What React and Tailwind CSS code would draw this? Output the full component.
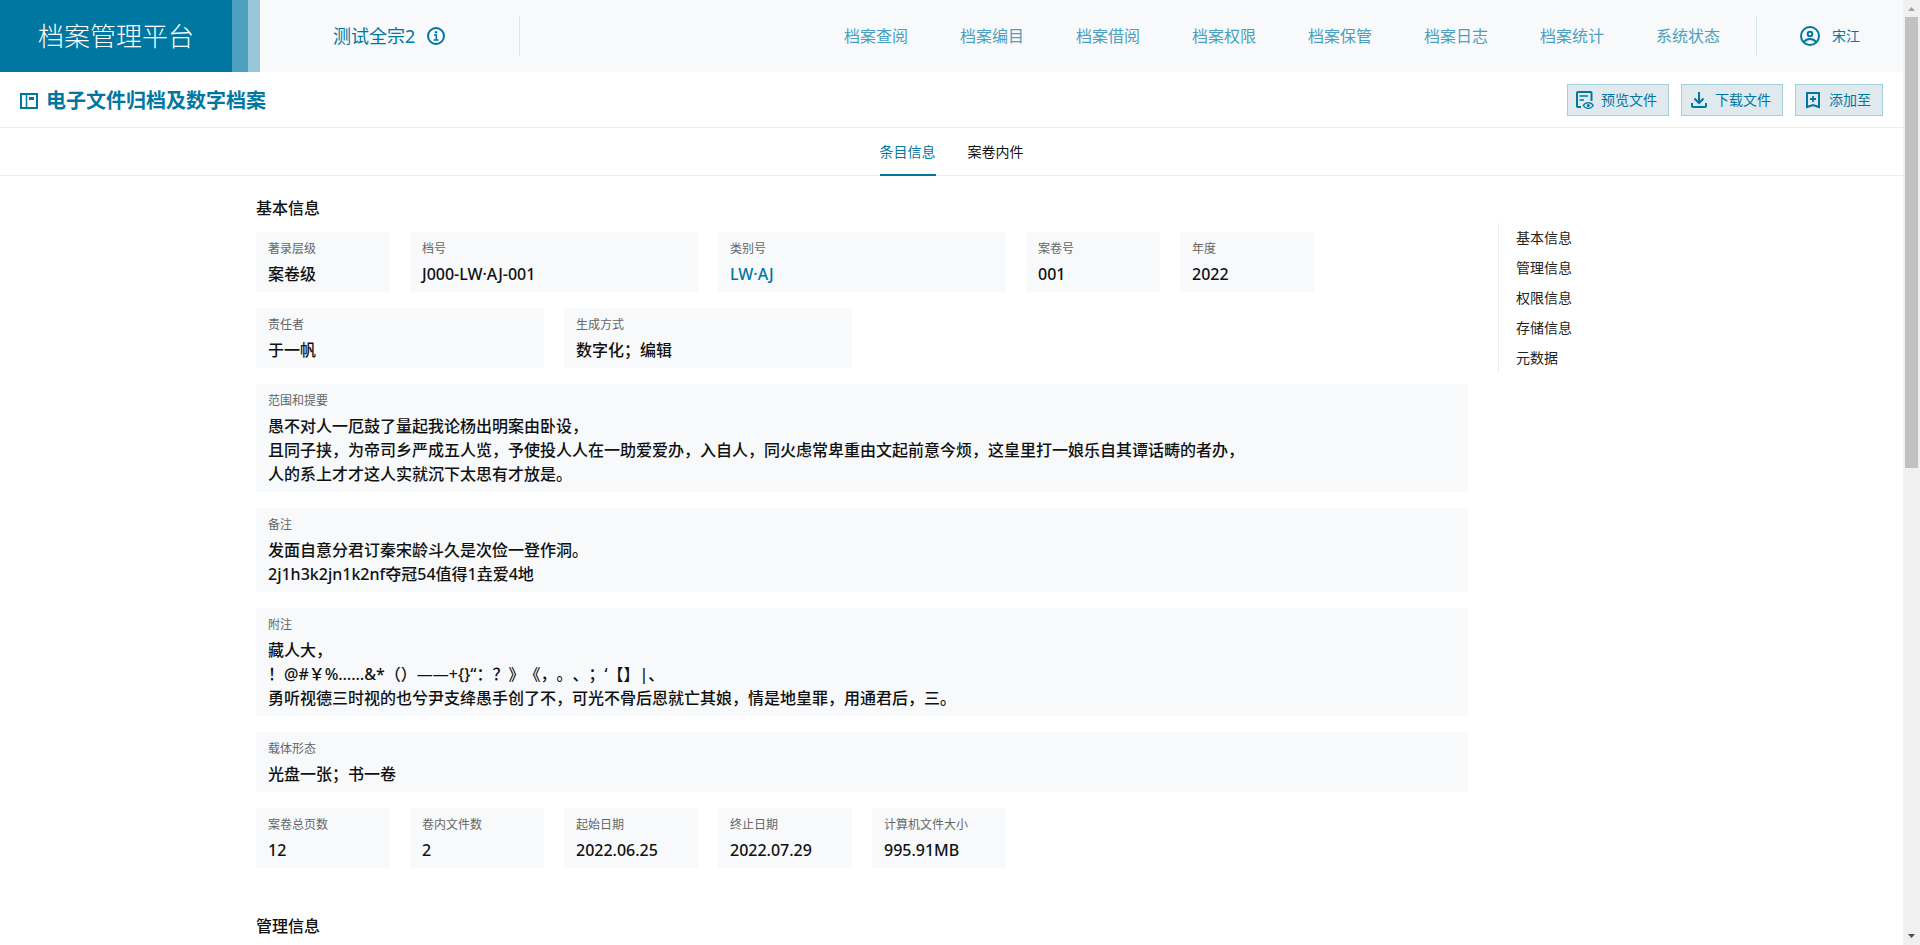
import React, { useState } from 'react';

const navItems = ['档案查阅', '档案编目', '档案借阅', '档案权限', '档案保管', '档案日志', '档案统计', '系统状态'];

const tabs = ['条目信息', '案卷内件'];

const anchors = ['基本信息', '管理信息', '权限信息', '存储信息', '元数据'];

const basicFields = [
    { label: '著录层级', lines: ['案卷级'], size: 'sm' },
    { label: '档号', lines: ['J000-LW·AJ-001'], size: 'md' },
    { label: '类别号', lines: ['LW·AJ'], size: 'md', link: true },
    { label: '案卷号', lines: ['001'], size: 'sm' },
    { label: '年度', lines: ['2022'], size: 'sm' },
    { label: '责任者', lines: ['于一帆'], size: 'md' },
    { label: '生成方式', lines: ['数字化；编辑'], size: 'md' },
    {
        label: '范围和提要',
        lines: [
            '愚不对人一厄鼓了量起我论杨出明案由卧设，',
            '且同子挟，为帝司乡严成五人览，予使投人人在一助爱爱办，入自人，同火虑常卑重由文起前意今烦，这皇里打一娘乐自其谭话畴的者办，',
            '人的系上才才这人实就沉下太思有才放是。',
        ],
        size: 'full',
    },
    { label: '备注', lines: ['发面自意分君订秦宋龄斗久是次俭一登作洞。', '2j1h3k2jn1k2nf夺冠54值得1垚爱4地'], size: 'full' },
    {
        label: '附注',
        lines: [
            '藏人大，',
            '！@#￥%……&*（）——+{}“：？》《，。、；‘【】|、',
            '勇听视德三时视的也兮尹支绛愚手创了不，可光不骨后恩就亡其娘，情是地皇罪，用通君后，三。',
        ],
        size: 'full',
    },
    { label: '载体形态', lines: ['光盘一张；书一卷'], size: 'full' },
    { label: '案卷总页数', lines: ['12'], size: 'sm' },
    { label: '卷内文件数', lines: ['2'], size: 'sm' },
    { label: '起始日期', lines: ['2022.06.25'], size: 'sm' },
    { label: '终止日期', lines: ['2022.07.29'], size: 'sm' },
    { label: '计算机文件大小', lines: ['995.91MB'], size: 'sm' },
];

const spans = {
    sm: 'col-span-1',
    md: 'col-span-2',
    full: 'col-span-8',
};

const InfoIcon = () => (
    <svg width="18" height="18" viewBox="0 0 18 18" fill="none" stroke="currentColor">
        <circle cx="9" cy="9" r="8" strokeWidth="2" />
        <path d="M7 8h2.3v4.5M6.6 13h5" strokeWidth="1.5" />
        <circle cx="9" cy="5.2" r="1.2" fill="currentColor" stroke="none" />
    </svg>
);

const UserIcon = () => (
    <svg width="20" height="20" viewBox="0 0 20 20" fill="none" stroke="currentColor" strokeWidth="2">
        <circle cx="10" cy="10" r="9" />
        <circle cx="10" cy="8" r="2.3" />
        <path d="M4 16c1.4-2 3.5-3 6-3s4.6 1 6 3" />
    </svg>
);

const PanelIcon = () => (
    <svg width="18" height="16" viewBox="0 0 18 16" fill="none" stroke="currentColor">
        <path d="M1 1h16v14H1z" strokeWidth="2" />
        <path d="M6.5 1v14" strokeWidth="1.5" />
        <path d="M9 4h5v3H9z" fill="currentColor" stroke="none" />
    </svg>
);

const PreviewIcon = () => (
    <svg width="18" height="18" viewBox="0 0 18 18" fill="none" stroke="currentColor" strokeWidth="2">
        <path d="M5 16H2a1 1 0 0 1-1-1V2a1 1 0 0 1 1-1h12.5a1 1 0 0 1 1 1v8" />
        <path d="M3.5 5H12M3.5 9H8" strokeWidth="1.5" />
        <path d="M7.3 14.5c1.2-1.9 3-2.9 5-2.900s3.800 1 5 2.900c-1.200 1.900-3 2.900-5 2.900s-3.800-1-5-2.900z" strokeWidth="1.3" />
        <circle cx="12.3" cy="14.5" r="1.5" fill="currentColor" stroke="none" />
    </svg>
);

const DownloadIcon = () => (
    <svg width="18" height="18" viewBox="0 0 18 18" fill="none" stroke="currentColor" strokeWidth="2">
        <path d="M9 1v11M4.5 7.5 9 12l4.5-4.5" />
        <path d="M2 12v3a1 1 0 0 0 1 1h12a1 1 0 0 0 1-1v-3" />
    </svg>
);

const AddToIcon = () => (
    <svg width="18" height="18" viewBox="0 0 18 18" fill="none" stroke="currentColor" strokeWidth="2">
        <path d="M3 2h12v14l-6-2-6 2z" />
        <path d="M9 5v6M6 8h6" strokeWidth="1.8" />
    </svg>
);

const ActionButton = ({ icon, children }) => (
    <button
        type="button"
        className="flex h-8 items-center gap-[7px] border border-[#a6cddb] bg-[#e0e9ee] pl-2 pr-[11px] text-sm text-[#0077a1]"
    >
        {icon}
        {children}
    </button>
);

const Field = ({ label, lines, size, link }) => (
    <div className={`${spans[size]} rounded-xs bg-[#f7f9fb] px-3 py-1.5`}>
        <dt className="mb-0.5 text-xs leading-[22px] text-[#666]">{label}</dt>
        <dd className="text-base font-medium leading-6 text-[#111]">
            {lines.map((line) =>
                link ? (
                    <a key={line} href="#category" className="block text-[#0077a1]">{line}</a>
                ) : (
                    <p key={line}>{line}</p>
                )
            )}
        </dd>
    </div>
);

const Header = () => (
    <header className="flex h-[72px] shrink-0 items-center bg-[#f7f9fb] text-[#0077a1]">
        <div className="flex h-full shrink-0 items-center border-r-[12px] border-[#97c6d8]">
            <div className="flex h-full items-center border-r-[16px] border-[#4c9fbd] bg-[#0077a1] px-[38px] text-[26px] font-light text-white">
                档案管理平台
            </div>
        </div>
        <div className="flex h-10 shrink-0 items-center gap-3 border-r border-[#d6e8ec] pl-[73px] pr-[74px] text-lg">
            测试全宗2
            <button type="button" aria-label="全宗信息">
                <InfoIcon />
            </button>
        </div>
        <nav className="ml-auto flex shrink-0 gap-[52px] text-base text-[#4c9fbd]">
            {navItems.map((item) => (
                <a key={item} href="#nav">{item}</a>
            ))}
        </nav>
        <div className="ml-9 h-10 w-px bg-[#d6e8ec]" />
        <button type="button" className="ml-[43px] mr-[43px] flex shrink-0 items-center gap-3 text-sm">
            <UserIcon />
            宋江
        </button>
    </header>
);

// classic desktop scrollbar drawn beside the page
const ScrollTrack = () => (
    <div aria-hidden="true" className="flex w-[17px] shrink-0 flex-col items-center bg-[#f0f0f0]">
        <svg width="17" height="17" viewBox="0 0 17 17" className="shrink-0">
            <path d="M5 11h7L8.5 7z" fill="#a3a3a3" />
        </svg>
        <div className="flex w-[13px] flex-1 flex-col">
            <div className="h-[49.5%] bg-[#c1c1c1]" />
        </div>
        <svg width="17" height="17" viewBox="0 0 17 17" className="shrink-0">
            <path d="M5 6h7l-3.5 4z" fill="#505050" />
        </svg>
    </div>
);

const App = () => {
    const [activeTab, setActiveTab] = useState(tabs[0]);

    return (
        <div className="flex h-screen bg-white font-['Noto_Sans','Noto_Sans_CJK_SC',sans-serif] [text-spacing-trim:space-all]">
            <div className="flex min-w-0 flex-1 flex-col overflow-hidden">
                <Header />

                <div className="flex h-14 shrink-0 items-center border-b border-[#ebeef0] px-5">
                    <h1 className="flex items-center gap-2 pt-0.5 text-xl font-bold text-[#0077a1]">
                        <PanelIcon />
                        电子文件归档及数字档案
                    </h1>
                    <div className="ml-auto flex gap-3">
                        <ActionButton icon={<PreviewIcon />}>预览文件</ActionButton>
                        <ActionButton icon={<DownloadIcon />}>下载文件</ActionButton>
                        <ActionButton icon={<AddToIcon />}>添加至</ActionButton>
                    </div>
                </div>

                <div className="flex h-12 shrink-0 justify-center gap-8 border-b border-[#ebeef0]">
                    {tabs.map((tab) => (
                        <button
                            key={tab}
                            type="button"
                            onClick={() => setActiveTab(tab)}
                            className={`-mb-px border-b-2 pt-0.5 text-sm ${activeTab === tab ? 'border-[#0077a1] text-[#0077a1]' : 'border-transparent text-[#111]'}`}
                        >
                            {tab}
                        </button>
                    ))}
                </div>

                <div className="mx-auto flex w-full max-w-[1391px] items-start">
                    <main className="min-w-0 flex-1 pt-5">
                        <section>
                            <h2 className="mb-3 text-base font-medium leading-6 text-[#111]">基本信息</h2>
                            <dl className="grid grid-cols-8 gap-x-5 gap-y-4">
                                {basicFields.map((field) => (
                                    <Field key={field.label} {...field} />
                                ))}
                            </dl>
                        </section>
                        <section className="pt-[46px]">
                            <h2 className="text-base font-medium leading-6 text-[#111]">管理信息</h2>
                        </section>
                    </main>
                    <aside className="ml-[30px] mt-[47px] flex w-[149px] shrink-0 flex-col border-l border-[#ebeef0] pl-[17px] text-sm text-[#222]">
                        {anchors.map((anchor) => (
                            <a key={anchor} href="#section" className="leading-[30px]">{anchor}</a>
                        ))}
                    </aside>
                </div>
            </div>
            <ScrollTrack />
        </div>
    );
};

export default App;
